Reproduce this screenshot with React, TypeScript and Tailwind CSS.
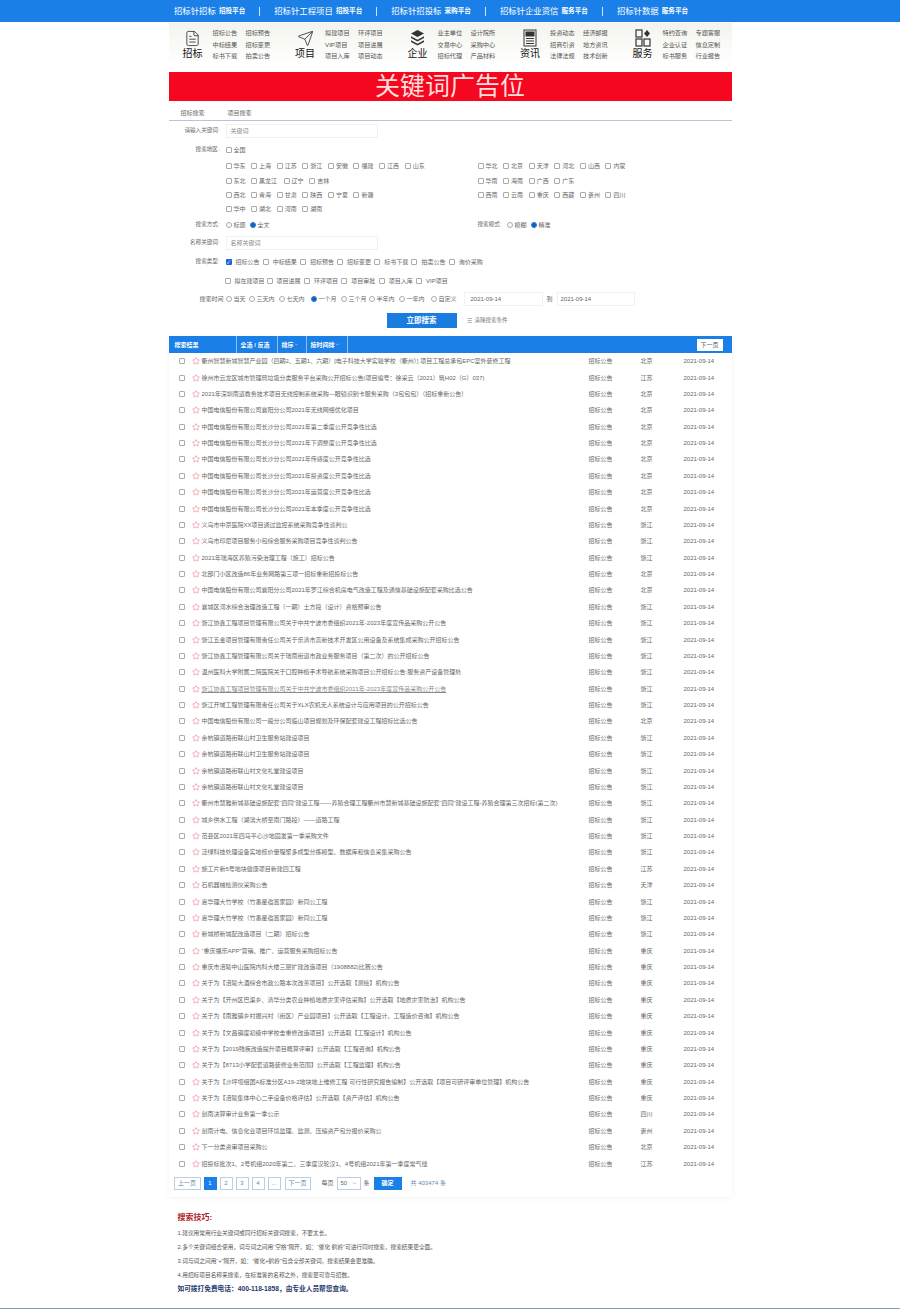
import { FileText, Send, Star, ChevronDown } from "lucide-react";

const topLinks = [
  ["招标针招标", "招投平台"],
  ["招标针工程项目", "招投平台"],
  ["招标针招投标", "采购平台"],
  ["招标针企业资信", "服务平台"],
  ["招标针数据", "服务平台"],
];

function LayersIcon() {
  return (
    <svg width="17" height="18" viewBox="0 0 17 18" fill="#333">
      <path d="M8.5 1 15 4.5 8.5 8 2 4.5Z" />
      <path d="M2 7.2 8.5 10.7 15 7.2V9L8.5 12.5 2 9Z" />
      <path d="M2 11.2 8.5 14.7 15 11.2V13L8.5 16.5 2 13Z" />
    </svg>
  );
}

function NewsIcon() {
  return (
    <svg width="14" height="18" viewBox="0 0 14 18" fill="none" stroke="#333" strokeWidth="1">
      <rect x="1" y="1" width="12" height="16" />
      <rect x="3" y="3" width="8" height="4" fill="#333" />
      <path d="M3 9.5h8M3 12h8M3 14.5h8" />
    </svg>
  );
}

function GridIcon() {
  return (
    <svg width="16" height="18" viewBox="0 0 16 18" fill="none" stroke="#333" strokeWidth="1.2">
      <rect x="1" y="1" width="6" height="7" />
      <rect x="1" y="10" width="6" height="7" />
      <rect x="9" y="10" width="6" height="7" />
      <path d="M12 1 15 4.5 12 8 9 4.5Z" fill="#333" stroke="none" />
    </svg>
  );
}

const navGroups = [
  {
    label: "招标",
    icon: <FileText size={17} strokeWidth={1.2} color="#333" />,
    links: ["招标公告", "招标预告", "中标结果", "招标变更", "标书下载", "拍卖公告"],
  },
  {
    label: "项目",
    icon: <Send size={17} strokeWidth={1.2} color="#333" />,
    links: ["拟建项目", "环评项目", "VIP项目", "项目进展", "项目入库", "项目动态"],
  },
  {
    label: "企业",
    icon: <LayersIcon />,
    links: ["业主单位", "设计院所", "交易中心", "采购中心", "招标代理", "产品材料"],
  },
  {
    label: "资讯",
    icon: <NewsIcon />,
    links: ["投资动态", "经济邮报", "招商引资", "地方资讯", "法律法规", "技术创新"],
  },
  {
    label: "服务",
    icon: <GridIcon />,
    links: ["特约查询", "专题客服", "企业认证", "信息定制", "标书服务", "行业报告"],
  },
];

const regionsLeft = [
  ["华东", "上海", "江苏", "浙江", "安徽", "福建", "江西", "山东"],
  ["东北", "黑龙江", "辽宁", "吉林"],
  ["西北", "青海", "甘肃", "陕西", "宁夏", "新疆"],
  ["华中", "湖北", "河南", "湖南"],
];

const regionsRight = [
  ["华北", "北京", "天津", "河北", "山西", "内蒙"],
  ["华南", "海南", "广西", "广东"],
  ["西南", "云南", "重庆", "西藏", "贵州", "四川"],
];

const types1 = ["招标公告", "中标结果", "招标预告", "招标变更", "标书下载", "拍卖公告", "询价采购"];
const types2 = ["拟在建项目", "项目进展", "环评项目", "项目审批", "项目入库", "VIP项目"];
const times = [
  ["当天", "w-[23px]"],
  ["三天内", "w-[30px]"],
  ["七天内", "w-[32px]"],
  ["一个月", "w-[30px]"],
  ["三个月", "w-[28px]"],
  ["半年内", "w-[30px]"],
  ["一年内", "w-[32px]"],
  ["自定义", "w-[32px]"],
];

const rows: [string, string][] = [
  ["衢州智慧新城智慧产业园（四期2、五期1、六期）[电子科技大学实验学校（衢州）] 项目工程总承包EPC室外装修工程", "北京"],
  ["徐州市云龙区城市管理局垃圾分类服务平台采购公开招标公告(项目编号：徐采云（2021）筑H02（G）037)", "江苏"],
  ["2021年深圳南道教务技术项目无线控制系统采购—眼镜识别卡服务采购（3包包包）（招标重新公告）", "北京"],
  ["中国电信股份有限公司襄阳分公司2021年无线网络优化项目", "北京"],
  ["中国电信股份有限公司长沙分公司2021年第二季度公开竞争性比选", "北京"],
  ["中国电信股份有限公司长沙分公司2021年下调整度公开竞争性比选", "北京"],
  ["中国电信股份有限公司长沙分公司2021年传感度公开竞争性比选", "北京"],
  ["中国电信股份有限公司长沙分公司2021年投资度公开竞争性比选", "北京"],
  ["中国电信股份有限公司长沙分公司2021年运营度公开竞争性比选", "北京"],
  ["中国电信股份有限公司长沙分公司2021年本季度公开竞争性比选", "北京"],
  ["义乌市中京医院XX项目通过监控系统采购竞争性谈判公", "浙江"],
  ["义乌市印尼项目服务小包综合服务采购项目竞争性谈判公告", "浙江"],
  ["2021年瑞海区养殖污染治理工程（施工）招标公告", "浙江"],
  ["北部门小区改造86年业务网路第三项一招标重新招投标公告", "北京"],
  ["中国电信股份有限公司襄阳分公司2021年罗江综合机房电气改造工程及通信基础设施配套采购比选公告", "北京"],
  ["襄城区河水综合治理改造工程（一期）土方段（设计）资格预审公告", "浙江"],
  ["浙江协鑫工程项目管理有限公司关于中共宁波市委组织2021年-2023年度宣传品采购公开公告", "浙江"],
  ["浙江五金项目管理有限责任公司关于乐清市高新技术开发区公用设备及系统集成采购公开招标公告", "浙江"],
  ["浙江协鑫工程管理有限公司关于瑞南街道市政业务服务项目（第二次）的公开招标公告", "浙江"],
  ["温州医科大学附属二院医院关于口腔种植手术导航系统采购项目公开招标公告:服务资产设备管理处", "浙江"],
  ["浙江协鑫工程项目管理有限公司关于中共宁波市委组织2021年-2023年度宣传品采购公开公告", "浙江"],
  ["浙江开域工程管理有限责任公司关于XLX农机无人系统设计与应用项目的公开招标公告", "浙江"],
  ["中国电信股份有限公司一般分公司临山项目规划及环保配套建设工程招标比选公告", "北京"],
  ["余杭镇道路街联山村卫生服务站建设项目", "浙江"],
  ["余杭镇道路街联山村卫生服务站建设项目", "浙江"],
  ["余杭镇道路街联山村文化礼堂建设项目", "浙江"],
  ["余杭镇道路街联山村文化礼堂建设项目", "浙江"],
  ["衢州市慧雅新城基础设施配套“四同”建设工程——养殖合理工程衢州市慧新城基础设施配套“四同”建设工程-养殖合理第三次招标(第二次)", "浙江"],
  ["城乡供水工程（湖滨大桥至南门路段）——道路工程", "浙江"],
  ["范县区2021年四马平心沙地固发第一季采购文件", "浙江"],
  ["泛绿科技处理设备实地核价量程聚多成型分拣模型、数据库和信息采集采购公告", "浙江"],
  ["施工片新5号地块健康项目新建四工程", "江苏"],
  ["石机器械检测仪采购公告", "天津"],
  ["嘉华理大竹学校（竹番星宿置家园）新同公工程", "浙江"],
  ["嘉华理大竹学校（竹番星宿置家园）新同公工程", "浙江"],
  ["新城桥新城配改造项目（二期）招标公告", "浙江"],
  ["“重庆福乐APP”营销、推广、运营服务采购招标公告", "重庆"],
  ["重庆市涪陵中山医院内科大楼三层扩建改造项目（1908882)比赛公告", "重庆"],
  ["关于为【涪陵大酒综合市政公路本次改善项目】公开选取【测绘】机构公告", "重庆"],
  ["关于为【开州区巴渠乡、清华分类农业种植地质灾害评估采购】公开选取【地质灾害防治】机构公告", "重庆"],
  ["关于为【南雅镇乡村振兴村（街区）产业园项目】公开选取【工程设计、工程造价咨询】机构公告", "重庆"],
  ["关于为【文昌镇度初级中学校舍重修改造项目】公开选取【工程设计】机构公告", "重庆"],
  ["关于为【2019残疾改造提升项目概算评审】公开选取【工程咨询】机构公告", "重庆"],
  ["关于为【8713小学配套道路装修业务范围】公开选取【工程监理】机构公告", "重庆"],
  ["关于为【沙坪坝组团A标准分区A19-2地块地上维修工程 可行性研究报告编制】公开选取【项目可研评审单位管理】机构公告", "重庆"],
  ["关于为【涪陵集体中心二手设备价格评估】公开选取【资产评估】机构公告", "重庆"],
  ["剑南决算审计业务第一季公示", "四川"],
  ["剑南计电、信息化业项目环境监理、监测、压缩资产包分报价采购公", "贵州"],
  ["下一分类资审项目采购公", "北京"],
  ["招投标批次1、2号机组2020年第二、三季度汉轮汉1、4号机组2021年第一季度常气缝", "江苏"],
];

function Box({ on = false }: { on?: boolean }) {
  return on ? (
    <span className="flex h-[6px] w-[6px] shrink-0 items-center justify-center rounded-[1px] bg-[#1c66d4] text-[5px] leading-none text-white">✓</span>
  ) : (
    <span className="h-[6px] w-[6px] shrink-0 rounded-[1px] border border-[#aaaaaa] bg-white" />
  );
}

function Radio({ on = false }: { on?: boolean }) {
  return on ? (
    <span className="h-[6px] w-[6px] shrink-0 rounded-full border-[1.5px] border-[#1c7fe0] bg-[#1c5fb0]" />
  ) : (
    <span className="h-[6px] w-[6px] shrink-0 rounded-full border border-[#aaaaaa] bg-white" />
  );
}

function Opt({ text, className, on, radio }: { text: string; className: string; on?: boolean; radio?: boolean }) {
  return (
    <span className={`flex items-center gap-[2px] ${className}`}>
      {radio ? <Radio on={on} /> : <Box on={on} />}
      <span>{text}</span>
    </span>
  );
}

function RegionRow({ items }: { items: string[] }) {
  return (
    <div className="flex h-[14.4px] items-center">
      {items.map((item) => (
        <Opt key={item} text={item} className={item === "黑龙江" ? "w-[32.5px]" : "w-[25.6px]"} />
      ))}
    </div>
  );
}

function Label({ children }: { children: string }) {
  return <span className="w-[54px] shrink-0 pr-[3px] text-right text-[5.6px] whitespace-nowrap">{children}</span>;
}

function PageBtn({ text, className }: { text: string; className: string }) {
  return (
    <span className={`flex h-[13px] items-center justify-center border border-[#b9cfe8] bg-white text-[#6a87a6] ${className}`}>
      {text}
    </span>
  );
}

export default function App() {
  return (
    <div className="flex h-[1309px] flex-col overflow-hidden bg-white font-['Liberation_Sans','Noto_Sans_CJK_SC',sans-serif] text-[6px] leading-none text-[#666]">
      <header className="flex h-[22px] shrink-0 items-center bg-[#1a7fe6] pl-[174px] text-white">
        {topLinks.map(([name, tag], i) => (
          <div key={name} className="flex items-center">
            {i > 0 && <span className="mx-[14px] h-[9px] w-px bg-white/80" />}
            <span className="text-[8.4px] whitespace-nowrap">{name}</span>
            <span className="ml-[3px] text-[6.6px] font-bold whitespace-nowrap">{tag}</span>
          </div>
        ))}
      </header>

      <div className="mx-auto w-[563px]">
        <nav className="mt-px flex h-[42px] bg-gradient-to-b from-[#f4f4ee] to-white text-[6.2px] text-[#555]">
          {navGroups.map((g) => (
            <div key={g.label} className="flex w-[112.5px] shrink-0 items-center">
              <div className="flex w-[44px] shrink-0 flex-col items-center pb-[1px] pl-[4px]">
                <div className="flex h-[19px] items-center">{g.icon}</div>
                <span className="mt-[1px] text-[10px] text-[#111]">{g.label}</span>
              </div>
              <div className="grid w-[66px] shrink-0 grid-cols-[33px_33px] gap-y-[5.4px] pt-[2px]">
                {g.links.map((l) => (
                  <span key={l} className="whitespace-nowrap">{l}</span>
                ))}
              </div>
            </div>
          ))}
        </nav>

        <div className="mt-[7px] flex h-[29px] items-center justify-center bg-[#f5071f] text-[25px] text-[#ffdede]">
          关键词广告位
        </div>

        <div className="mt-[4px] flex h-[16px] items-center border-b border-[#b6c6d8] pl-[12px] text-[6px]">
          <span className="w-[47px]">招标搜索</span>
          <span>项目搜索</span>
        </div>

        <form className="text-[6px]">
          <div className="mt-[3px] flex h-[14px] items-center">
            <Label>请输入关键词:</Label>
            <span className="ml-[3px] flex h-[14px] w-[152px] items-center border border-[#f1f1f1] pl-[4px] text-[#888]">关键词</span>
          </div>
          <div className="mt-[5px] flex h-[14px] items-center">
            <Label>搜索地区:</Label>
            <Opt text="全国" className="ml-[3px]" />
          </div>
          <div className="mt-[2px] flex h-[58px]">
            <div className="ml-[57px] w-[252px]">
              {regionsLeft.map((r) => <RegionRow key={r[0]} items={r} />)}
            </div>
            <div>
              {regionsRight.map((r) => <RegionRow key={r[0]} items={r} />)}
            </div>
          </div>
          <div className="mt-[1px] mb-[1px] flex h-[14px] items-center">
            <Label>搜索方式:</Label>
            <Opt text="标题" className="ml-[3px] w-[24px]" radio />
            <Opt text="全文" className="w-[228px]" radio on />
            <span className="w-[29px] text-[5.6px]">搜索模式:</span>
            <Opt text="模糊" className="w-[24px]" radio />
            <Opt text="精准" className="" radio on />
          </div>
          <div className="mt-[4px] flex h-[14px] items-center">
            <Label>名称关键词:</Label>
            <span className="ml-[3px] flex h-[14px] w-[152px] items-center border border-[#f1f1f1] pl-[4px] text-[#888]">名称关键词</span>
          </div>
          <div className="mt-[5px] flex h-[14px] items-center">
            <Label>搜索类型:</Label>
            <span className="ml-[3px] flex">
              {types1.map((t, i) => (
                <Opt key={t} text={t} className="w-[37.2px] gap-[4px]" on={i === 0} />
              ))}
            </span>
          </div>
          <div className="mt-[5px] flex h-[14px] items-center">
            <span className="ml-[56px] flex">
              <Opt text="拟在建项目" className="w-[42px] gap-[4px]" />
              {types2.slice(1).map((t) => (
                <Opt key={t} text={t} className="w-[37.4px] gap-[4px]" />
              ))}
            </span>
          </div>
          <div className="mt-[4px] flex h-[14px] items-center">
            <span className="ml-[31px] w-[26px] shrink-0 whitespace-nowrap">搜索时间</span>
            {times.map(([t, w]) => (
              <Opt key={t} text={t} className={w} radio on={t === "一个月"} />
            ))}
            <span className="ml-[1px] flex h-[14px] w-[79px] items-center border border-[#f1f1f1] pl-[6px]">2021-09-14</span>
            <span className="mx-[4px]">到</span>
            <span className="flex h-[14px] w-[78px] items-center border border-[#f1f1f1] pl-[3px]">2021-09-14</span>
          </div>
          <div className="mt-[7px] flex h-[15px] items-center pl-[218px]">
            <button type="button" className="h-[15px] w-[70px] bg-[#1b7ce0] text-[7.5px] font-bold text-white">立即搜索</button>
            <span className="ml-[10px] text-[#777]">☰</span>
            <span className="ml-[3px] text-[5.5px] text-[#777]">清除搜索条件</span>
          </div>
        </form>

        <section className="mt-[8px] h-[861px] shadow-[0_1px_6px_rgba(0,0,0,0.05)]">
          <div className="flex h-[17px] items-center bg-[#1a7fe6] pr-[9px] text-[6px] font-bold text-white">
            <span className="flex h-full w-[67px] items-center pl-[6px]">搜索结果</span>
            <span className="flex h-full w-[41px] items-center border-l border-white/50 pl-[4px]">全选 / 反选</span>
            <span className="flex h-full w-[29px] items-center border-l border-white/50 pl-[4px]">
              排序<ChevronDown size={5} />
            </span>
            <span className="flex h-full w-[42px] items-center border-r border-l border-white/50 pl-[4px]">
              按时间排<ChevronDown size={5} />
            </span>
            <span className="ml-auto flex h-[12px] w-[26px] items-center justify-center bg-white font-normal text-[#555]">下一页</span>
          </div>
          <div>
            {rows.map(([title, region], i) => (
              <div key={i} className="flex h-[16.38px] items-center">
                <span className="ml-[10px] h-[6px] w-[6px] shrink-0 rounded-[1px] border border-[#aaaaaa]" />
                <Star size={8} strokeWidth={1.4} className="ml-[7px] shrink-0 text-[#e2566b]" />
                <span className={`ml-[2px] w-[387px] shrink-0 whitespace-nowrap ${i === 20 ? "text-[#8a8a8a] underline" : ""}`}>{title}</span>
                <span className="w-[52px] shrink-0">招标公告</span>
                <span className="w-[43px] shrink-0">{region}</span>
                <span>2021-09-14</span>
              </div>
            ))}
          </div>
          <div className="mt-[5px] flex items-center pl-[5px] text-[6px]">
            <PageBtn text="上一页" className="w-[27px]" />
            <span className="ml-[3px] flex h-[13px] w-[13px] items-center justify-center bg-[#1a7fe6] text-white">1</span>
            <PageBtn text="2" className="ml-[3px] w-[13px]" />
            <PageBtn text="3" className="ml-[3px] w-[13px]" />
            <PageBtn text="4" className="ml-[3px] w-[13px]" />
            <PageBtn text="..." className="ml-[3px] w-[13px]" />
            <PageBtn text="下一页" className="ml-[4px] w-[26px]" />
            <span className="ml-[11px]">每页</span>
            <span className="ml-[3px] flex h-[13px] w-[24px] items-center justify-between border border-[#b9cfe8] px-[3px]">
              50<ChevronDown size={5} />
            </span>
            <span className="ml-[3px]">条</span>
            <span className="ml-[4px] flex h-[13px] w-[28px] items-center justify-center bg-[#1a7fe6] font-bold text-white">确定</span>
            <span className="ml-[9px] text-[#6a87a6]">共 403474 条</span>
          </div>
        </section>

        <div className="mt-[17px] pl-[9px] text-[5.7px] text-[#555]">
          <p className="text-[8px] font-bold text-[#b0202a]">搜索技巧:</p>
          <p className="mt-[7px] h-[14px] leading-[8px]">1.建议用常用行业关键词或同行招标关键词搜索，不要太长。</p>
          <p className="h-[14px] leading-[8px]">2.多个关键词组合使用，词与词之间用“空格”隔开，如：“催化 鹤岭”可进行同时搜索，搜索结果更全面。</p>
          <p className="h-[14px] leading-[8px]">3.词与词之间用“+”隔开，如：“催化+鹤岭”包含全部关键词，搜索结果会更准确。</p>
          <p className="h-[14px] leading-[8px]">4.用招标项目名称来搜索，在标准答的名称之外，搜索更可靠与招数。</p>
          <p className="h-[14px] text-[6.7px] leading-[8px] font-bold text-[#1f3a6e]">如可拨打免费电话：400-118-1858，由专业人员帮您查询。</p>
        </div>
      </div>
      <div className="mt-auto h-px shrink-0 bg-[#7f9fb8]" />
    </div>
  );
}
